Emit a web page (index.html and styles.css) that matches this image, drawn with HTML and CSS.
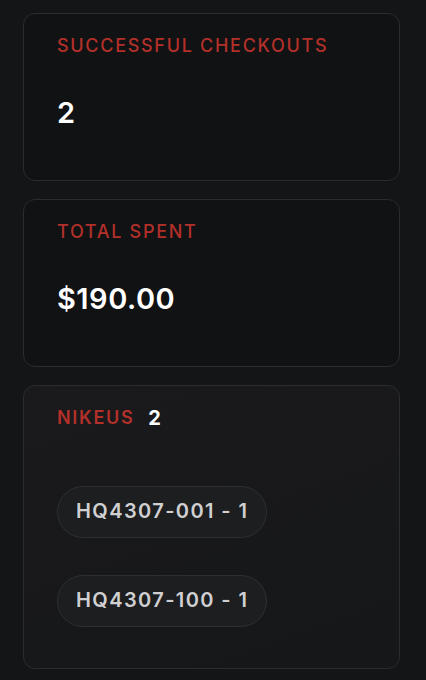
FILE: index.html
```html
<!DOCTYPE html>
<html lang="en">
  <head>
    <meta charset="UTF-8" />
    <meta name="viewport" content="width=device-width, initial-scale=1.0" />
    <title>Checkouts</title>
    <link rel="stylesheet" href="styles.css">
  </head>
  <body>
    <main class="stats">
      <article class="card">
        <p class="label">Successful checkouts</p>
        <p class="value">2</p>
      </article>
      <article class="card">
        <p class="label">Total spent</p>
        <p class="value">$190.00</p>
      </article>
      <article class="card store">
        <div class="store-head">
          <p class="label">NikeUS</p>
          <span class="count">2</span>
        </div>
        <ul class="skus">
          <li class="pill">HQ4307-001 - 1</li>
          <li class="pill">HQ4307-100 - 1</li>
        </ul>
      </article>
    </main>
  </body>
</html>
```

FILE: styles.css
```css
* {
  box-sizing: border-box;
  margin: 0;
  padding: 0;
}

body {
  background-color: #141517;
  font-family: Inter, "Liberation Sans", sans-serif;
  font-feature-settings: "pnum";
  color: #ffffff;
}

.stats {
  display: flex;
  flex-direction: column;
  gap: 18px;
  padding: 13px 26px 11px 23px;
}

.card {
  border: 1px solid #2b2c2f;
  border-radius: 12px;
  background-color: #111214;
  padding: 21px 33px 0;
  height: 168px;
}

.label {
  color: #b3302a;
  font-size: 18px;
  font-weight: 500;
  text-transform: uppercase;
  letter-spacing: 1.7px;
  line-height: 22px;
}

.value {
  margin-top: 41px;
  font-size: 29px;
  font-weight: 600;
  letter-spacing: 0.5px;
  line-height: 30px;
}

.store {
  height: 284px;
  background: linear-gradient(160deg, #1a1a1c, #161719);
}

.store-head {
  display: flex;
  align-items: center;
  gap: 14px;
}

.store-head .label {
  font-weight: 600;
}

.count {
  font-size: 20px;
  font-weight: 700;
  line-height: 22px;
}

.skus {
  list-style: none;
  display: flex;
  flex-direction: column;
  align-items: flex-start;
  gap: 37px;
  margin-top: 57px;
}

.pill {
  border: 1px solid #2e2f32;
  border-radius: 26px;
  background-color: #1d1e20;
  color: #d0d0d2;
  font-size: 20px;
  font-weight: 600;
  letter-spacing: 1.4px;
  line-height: 23px;
  padding: 13px 18px 14px;
}
```
